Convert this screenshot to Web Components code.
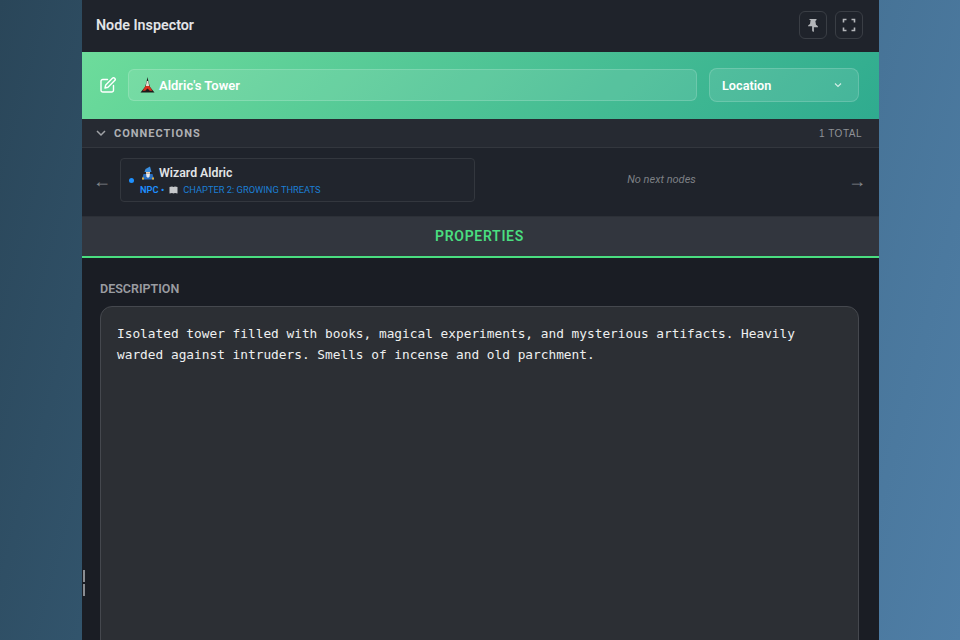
<!DOCTYPE html>
<html>
<head>
<meta charset="utf-8">
<title>Node Inspector</title>
<style>
  html, body { margin: 0; height: 100%; overflow: hidden; }
  body {
    background: linear-gradient(105deg, #2a4659 0%, #3c6684 50%, #4f7ea6 100%);
    font-family: Roboto, "Noto Sans", sans-serif;
  }
</style>
</head>
<body>
<node-inspector>
  <inspector-header slot="header" title-text="Node Inspector"></inspector-header>
  <node-banner slot="banner" name="Aldric's Tower" kind="Location"></node-banner>
  <connections-panel slot="connections">
    <connection-card slot="prev" name="Wizard Aldric" kind="NPC" chapter="CHAPTER 2: GROWING THREATS"></connection-card>
    <span slot="next">No next nodes</span>
  </connections-panel>
  <tab-bar slot="tabs" label="PROPERTIES"></tab-bar>
  <description-field slot="body" label="DESCRIPTION">Isolated tower filled with books, magical experiments, and mysterious artifacts. Heavily warded against intruders. Smells of incense and old parchment.</description-field>
</node-inspector>

<script>
function define(name, css, html) {
  customElements.define(name, class extends HTMLElement {
    constructor() {
      super();
      this.attachShadow({ mode: 'open' });
    }
    connectedCallback() {
      const get = (k) => this.getAttribute(k) || '';
      this.shadowRoot.innerHTML = `<style>${css}</style>${html(get)}`;
    }
  });
}

define('node-inspector', `
  :host { display: block; height: 640px; padding-left: 82px; }
  .panel {
    position: relative;
    width: 797px;
    height: 100%;
    background: #1a1d24;
    display: flex;
    flex-direction: column;
    overflow: hidden;
  }
  ::slotted(*) { flex: none; }
  .grip { position: absolute; left: 1px; top: 570px; display: flex; flex-direction: column; gap: 2px; }
  .grip i { display: block; width: 2px; height: 12px; background: #8a8d92; }
`, () => `
  <div class="panel">
    <slot name="header"></slot>
    <slot name="banner"></slot>
    <slot name="connections"></slot>
    <slot name="tabs"></slot>
    <slot name="body"></slot>
    <div class="grip"><i></i><i></i></div>
  </div>
`);

define('inspector-header', `
  :host { display: flex; align-items: center; justify-content: space-between; height: 52px; padding: 0 16px 2px 14px; background: #1f232b; box-sizing: border-box; }
  h1 { margin: 0; font-size: 14.300px; font-weight: 600; color: #e2e4e7; }
  .btns { display: flex; gap: 8px; }
  button { width: 28px; height: 28px; padding: 0; display: grid; place-items: center; background: transparent; border: 1px solid #3a3e45; border-radius: 6px; color: #b4b6ba; }
  svg { display: block; }
`, (get) => `
  <h1>${get('title-text')}</h1>
  <div class="btns">
    <button aria-label="Pin">
      <svg width="14" height="14" viewBox="0 0 16 16" fill="currentColor"><path d="M4 1h8v1.400l-1.300 1 .7 4.400c1.200.6 2.100 1.500 2.400 2.700H9v4.800L8 16l-1-1.700v-4.800H2.200c.3-1.200 1.200-2.100 2.400-2.700l.7-4.400L4 2.400z"/></svg>
    </button>
    <button aria-label="Fullscreen">
      <svg width="14" height="14" viewBox="0 0 14 14" fill="none" stroke="currentColor" stroke-width="1.600"><path d="M1.500 4.500V1.500H4.500M9.500 1.500h3v3M12.500 9.500v3h-3M4.500 12.500h-3v-3"/></svg>
    </button>
  </div>
`);

define('node-banner', `
  :host { display: flex; align-items: center; gap: 12px; height: 67px; padding: 0 20px 1px 18px; box-sizing: border-box; background: linear-gradient(135deg, #6ddc9b 0%, #2fab8f 100%); color: #fff; font-weight: 600; font-size: 13px; }
  svg { flex: none; display: block; }
  .name { flex: 1; height: 32px; display: flex; align-items: center; gap: 4px; padding: 0 11px; box-sizing: border-box; background: rgba(255,255,255,.1); border: 1px solid rgba(255,255,255,.16); border-radius: 6px; }
  .kind { width: 150px; height: 34px; display: flex; align-items: center; justify-content: space-between; padding: 0 15px 0 12px; box-sizing: border-box; background: rgba(255,255,255,.1); border: 1px solid rgba(255,255,255,.16); border-radius: 8px; font-size: 12.700px; }
`, (get) => `
  <svg width="16" height="16" viewBox="0 0 16 16" fill="none" stroke="#fff" stroke-width="1.400" stroke-linecap="round" stroke-linejoin="round"><path d="M7.500 2.500H2.800A1.800 1.800 0 0 0 1 4.300v8.900A1.800 1.800 0 0 0 2.800 15h8.900a1.800 1.800 0 0 0 1.800-1.800V8.500"/><path d="M12.400 1.300a1.500 1.500 0 0 1 2.300 2.300L8 10.300l-3 .7.700-3z"/></svg>
  <div class="name">
    <svg width="15" height="16" viewBox="0 0 15 16"><path d="M7.500 0 8.500 5 10 10 14.500 15.500H.5L5 10 6.500 5z" fill="#1b1b1b"/><path d="M6.800 4h1.400l1 5H5.800z" fill="#e8e0d0"/><path d="M5.600 9h3.800l3 4.800h-2.600L7.500 11.500 5.200 13.800H2.600z" fill="#d8321e"/></svg>
    ${get('name')}
  </div>
  <div class="kind">${get('kind')}
    <svg width="10" height="10" viewBox="0 0 10 10" fill="none" stroke="#fff" stroke-opacity=".75" stroke-width="1.200"><path d="M2 3.500 5 6.500 8 3.500"/></svg>
  </div>
`);

define('connections-panel', `
  :host { display: block; background: #1f232b; border-bottom: 1px solid #2c3037; }
  .head { display: flex; align-items: center; height: 28px; padding: 0 17px 0 14px; background: #262a32; border-bottom: 1px solid #33373e; }
  .head svg { margin-right: 8px; }
  .title { flex: 1; font-size: 11px; font-weight: 700; letter-spacing: 1px; color: #aeb0b4; }
  .total { font-size: 10px; letter-spacing: .5px; color: #8f9297; font-family: "Liberation Sans", sans-serif; }
  .row { display: flex; align-items: center; height: 68px; padding: 0 15px 4px 14px; box-sizing: border-box; }
  .arrow { width: 24px; margin-left: -3px; margin-right: 3px; color: #85888d; font-size: 18px; font-family: "Liberation Sans", sans-serif; padding-top: 3px; flex: none; }
  .arrow.r { text-align: right; width: 20px; margin-left: 2px; margin-right: -2px; }
  .side { width: 355px; flex: none; }
  .next { flex: 1; text-align: center; font-size: 11px; font-style: italic; color: #7d8085; padding: 0 4px 2px 8px; }
`, () => `
  <div class="head">
    <svg width="10" height="10" viewBox="0 0 10 10" fill="none" stroke="#a0a2a6" stroke-width="1.500"><path d="M1 3 5 7 9 3"/></svg>
    <span class="title">CONNECTIONS</span>
    <span class="total">1 TOTAL</span>
  </div>
  <div class="row">
    <span class="arrow">←</span>
    <div class="side"><slot name="prev"></slot></div>
    <div class="next"><slot name="next"></slot></div>
    <span class="arrow r">→</span>
  </div>
`);

define('connection-card', `
  :host { display: flex; align-items: center; height: 44px; box-sizing: border-box; padding: 0 8px; background: #21252d; border: 1px solid #33373e; border-radius: 4px; }
  .dot { width: 5px; height: 5px; border-radius: 50%; background: #1e90ff; margin-right: 6px; flex: none; }
  svg { flex: none; display: block; }
  .name { display: flex; align-items: center; gap: 4px; font-size: 12.300px; font-weight: 600; color: #e2e4e7; line-height: 16px; padding: 0 0 3px 1px; }
  .meta { display: flex; align-items: center; gap: 5px; font-size: 9.300px; line-height: 12px; color: #1c7fd4; white-space: nowrap; }
  .meta b { font-weight: 600; color: #1e90ff; }
`, (get) => `
  <span class="dot"></span>
  <div>
    <div class="name">
      <svg width="14" height="14" viewBox="0 0 14 14"><path d="M3.500 6 4.500 3 9 .5 10.500 6z" fill="#3a8fe0"/><path d="M5 6h4v1.500H5z" fill="#f0d0b0"/><path d="M2.500 8h9l1.500 5.500H1z" fill="#2a6fc0"/><path d="M5 7.500h4L8.500 10.500 7 12 5.500 10.500z" fill="#eeeeee"/><path d="M1 11.500h2v2H1zM11 11.500h2v2h-2z" fill="#e0b040"/></svg>
      ${get('name')}
    </div>
    <div class="meta"><b>${get('kind')} •</b>
      <svg width="9" height="8" viewBox="0 0 9 8"><path d="M.5 1 3 .5 4.500 1 6 .5 8.500 1v6.500L6 7 4.500 7.500 3 7 .5 7.500z" fill="#c6c8cb"/></svg>
      <span>${get('chapter')}</span>
    </div>
  </div>
`);

define('tab-bar', `
  :host { display: flex; align-items: center; justify-content: center; height: 41px; box-sizing: border-box; padding: 0 2px 1px 0; background: #32363e; border-bottom: 2px solid #4ade80; color: #4ade80; font-size: 14px; font-weight: 600; letter-spacing: .7px; }
`, (get) => `<span>${get('label')}</span>`);

define('description-field', `
  :host { display: block; padding: 22px 20px 0 18px; }
  label { display: block; font-size: 12.500px; font-weight: 600; color: #9a9ca1; line-height: 18px; margin-bottom: 8px; }
  .box { height: 400px; box-sizing: border-box; padding: 16px; background: #2c2f34; border: 1px solid #45484e; border-radius: 12px; font-family: "DejaVu Sans Mono", monospace; font-size: 12.800px; line-height: 21px; color: #eeeff0; }
`, (get) => `
  <label>${get('label')}</label>
  <div class="box"><slot></slot></div>
`);
</script>
</body>
</html>
